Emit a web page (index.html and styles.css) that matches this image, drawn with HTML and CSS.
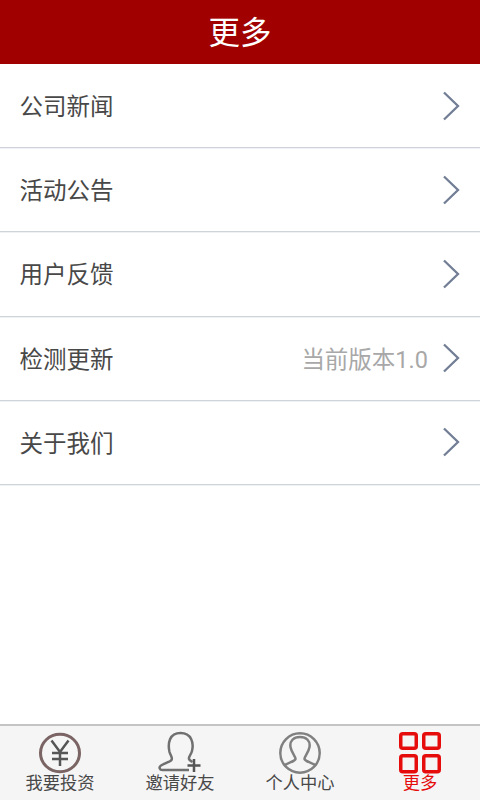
FILE: index.html
```html
<!DOCTYPE html>
<html lang="zh-CN">
<head>
<meta charset="utf-8">
<title>更多</title>
<link rel="stylesheet" href="styles.css">
</head>
<body>
<div class="app">
  <header class="top"><span>更多</span></header>
  <main class="list">
    <div class="row"><span class="label">公司新闻</span><svg class="chev" viewBox="0 0 18 30"><path d="M2 1.500 16 15 2 28.500"/></svg></div>
    <div class="row"><span class="label">活动公告</span><svg class="chev" viewBox="0 0 18 30"><path d="M2 1.500 16 15 2 28.500"/></svg></div>
    <div class="row"><span class="label">用户反馈</span><svg class="chev" viewBox="0 0 18 30"><path d="M2 1.500 16 15 2 28.500"/></svg></div>
    <div class="row"><span class="label">检测更新</span><span class="value">当前版本1.0</span><svg class="chev" viewBox="0 0 18 30"><path d="M2 1.500 16 15 2 28.500"/></svg></div>
    <div class="row"><span class="label">关于我们</span><svg class="chev" viewBox="0 0 18 30"><path d="M2 1.500 16 15 2 28.500"/></svg></div>
  </main>
  <nav class="tabs">
    <div class="tab">
      <svg class="ico" viewBox="0 0 44 44"><ellipse cx="22" cy="22" rx="19.500" ry="18.700" class="s-brown"/><path class="s-dark" d="M13.500 9.500 22 21 30.500 9.500M22 21V35M14 22H30M14 28H30"/></svg>
      <span>我要投资</span>
    </div>
    <div class="tab">
      <svg class="ico" viewBox="0 0 44 44"><path class="s-grey" d="M31 39H4.500C1.500 39 .5 36 3 34.500 6 32.500 12 31 13.500 29 15 27 12.500 24.500 11.500 21 9.500 12 11.500 2 22.500 2 33.500 2 36 12 34 20 33 24 30.500 25.500 31 28 31.500 29.500 33 30 34.500 31"/><path class="s-dark" d="M36 28V41M29.500 34.500H42.500"/></svg>
      <span>邀请好友</span>
    </div>
    <div class="tab">
      <svg class="ico" viewBox="0 0 44 44"><circle cx="22" cy="22" r="19.700" class="s-person"/><path class="s-person" d="M6 35C9 31.500 16.500 31 17.500 28 18 26 13.500 22 12.500 16 11.500 10 15.500 6 22 6 28.500 6 32.500 10 31.500 16 30.500 22 26 26 26.500 28 27.500 31 35 31.500 38 35"/></svg>
      <span>个人中心</span>
    </div>
    <div class="tab active">
      <svg class="ico" viewBox="0 0 44 44"><g class="s-red"><rect x="2.750" y="2.750" width="15.500" height="14.500" rx="2"/><rect x="25.750" y="2.750" width="15.500" height="14.500" rx="2"/><rect x="2.750" y="24.750" width="15.500" height="16" rx="2"/><rect x="25.750" y="24.750" width="15.500" height="16" rx="2"/></g></svg>
      <span>更多</span>
    </div>
  </nav>
</div>
</body>
</html>
```

FILE: styles.css
```css
* { box-sizing: border-box; }
html, body { margin: 0; padding: 0; }
body { font-family: "Noto Sans CJK SC", "Roboto", sans-serif; background: #fff; }
.app { width: 480px; height: 800px; display: flex; flex-direction: column; overflow: hidden; }
.top {
  height: 64px; flex: none; background: #a00000; color: #fff;
  font-size: 31.500px; display: flex; align-items: center; justify-content: center;
  padding-bottom: 4px;
}
.list { flex: 1; }
.row {
  height: 84.200px; display: flex; align-items: center; padding: 0 20px 0 19.500px;
  border-bottom: 1px solid #cfd4db; box-shadow: 0 1px 0 #f0f1f4; color: #484848; font-size: 23.500px;
}
.label { flex: 1; padding-bottom: 1px; }
.value { color: #a8a8a8; margin-right: 14px; padding-bottom: 1px; font-family: "Roboto", "Noto Sans CJK SC", sans-serif; }
.chev { width: 18px; height: 30px; flex: none; margin-right: 0; }
.chev path { fill: none; stroke: #727e95; stroke-width: 2.300; }
.tabs {
  height: 76px; flex: none; display: flex; background: #f5f5f5;
  border-top: 2px solid #c4c4c4;
}
.tab {
  flex: 1; display: flex; flex-direction: column; align-items: center;
  font-size: 17.250px; line-height: 22px; color: #484848; padding-top: 5px;
}
.tab.active { color: #e60c0c; }
.ico { width: 44px; height: 44px; flex: none; margin-bottom: -4px; }
.ico path, .ico circle, .ico ellipse, .ico rect { fill: none; }
.s-brown { stroke: #7a6464; stroke-width: 3; }
.s-dark { stroke: #555; stroke-width: 2.500; }
.s-grey { stroke: #707070; stroke-width: 2.500; }
.s-person { stroke: #808080; stroke-width: 2.500; }
.s-red rect { stroke: #e60c0c; stroke-width: 3.500; }
```
